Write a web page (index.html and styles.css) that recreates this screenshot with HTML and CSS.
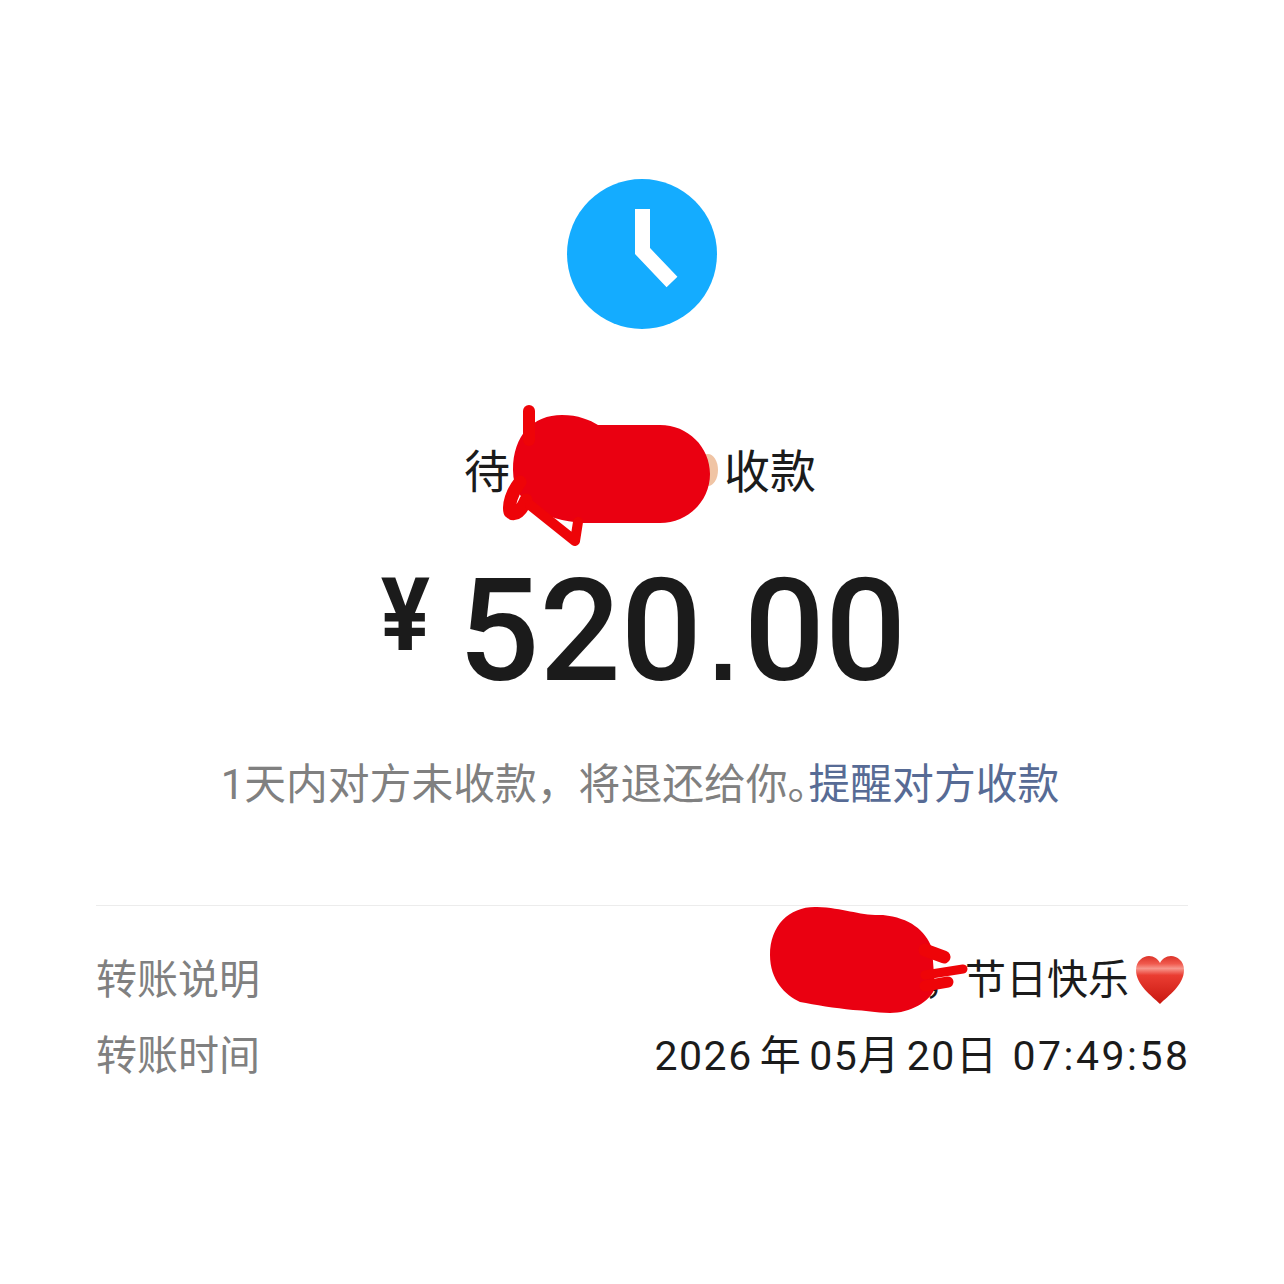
FILE: index.html
```html
<!DOCTYPE html>
<html lang="zh-CN">
<head>
  <meta charset="UTF-8" />
  <meta name="viewport" content="width=device-width, initial-scale=1.0"/>
  <title>转账详情</title>
  <link rel="stylesheet" href="styles.css">
</head>
<body>

  <div class="page">
    <svg class="status-icon" viewBox="0 0 150 150" width="150" height="150">
      <circle cx="75" cy="75" r="75" fill="#14acff"/>
      <path d="M75.5 30 V72 L105 103" fill="none" stroke="#fff" stroke-width="15"/>
    </svg>

    <div class="title">
      <span>待</span>
      <span class="title-name"></span>
      <span>收款</span>
    </div>

    <div class="amount">
      <span class="amount-sign">¥</span>
      <span class="amount-value">520<span class="amount-dot">.</span>00</span>
    </div>

    <div class="notice">1天内对方未收款，将退还给你<span class="notice-stop">。</span><span class="notice-link">提醒对方收款</span></div>

    <div class="details">
      <div class="row">
        <span class="row-label">转账说明</span>
        <span class="row-value">
          ，节日快乐
          <svg class="heart" viewBox="0 0 50 50" width="50" height="50">
            <defs>
              <linearGradient id="heart-fill" x1="0" y1="0" x2="0" y2="1">
                <stop offset="0" stop-color="#dc3228"/>
                <stop offset="0.16" stop-color="#f0594d"/>
                <stop offset="0.26" stop-color="#f7968c"/>
                <stop offset="0.4" stop-color="#ea3d32"/>
                <stop offset="1" stop-color="#c9170f"/>
              </linearGradient>
            </defs>
            <path d="M25 49 C17 41 1 30 1 15 C1 6 8 1 14 1 C19 1 23 4 25 8 C27 4 31 1 36 1 C42 1 49 6 49 15 C49 30 33 41 25 49 Z" fill="url(#heart-fill)"/>
          </svg>
        </span>
      </div>
      <div class="row">
        <span class="row-label">转账时间</span>
        <span class="row-value row-date">2026<span class="date-year">年</span>05<span class="date-unit">月</span>20<span class="date-unit">日</span><span class="date-time">07:49:58</span></span>
      </div>
    </div>

    <!-- red marker scribbles over the names -->
    <svg class="scribble" viewBox="0 0 1284 1284" width="1284" height="1284">
      <ellipse cx="708" cy="470" rx="10" ry="16" fill="#f0c4a4"/>
      <g fill="#ea0011">
        <path d="M513 470 C513 435 533 415 562 415 C578 415 590 420 598 425 L660 425 C688 425 710 447 710 474 C710 501 688 523 660 523 L583 523 C545 520 513 505 513 470 Z"/>
        <path d="M770 955 C770 925 790 906 817 907 C845 908 860 916 883 915 C910 918 925 930 932 948 L935 988 C930 1002 910 1013 890 1013 C875 1013 865 1010 853 1010 C835 1008 815 1005 800 1002 C785 995 770 980 770 955 Z"/>
      </g>
      <g fill="none" stroke="#ee0408" stroke-linecap="round" stroke-linejoin="round">
        <path d="M529 411 V440" stroke-width="12"/>
        <path d="M520 482 C512 492 508 505 510 512 C515 517 522 510 526 500" stroke-width="13"/>
        <path d="M530 505 L575 541 L578 522" stroke-width="10"/>
        <path d="M925 950 L944 957" stroke-width="13"/>
        <path d="M925 975 L963 969" stroke-width="9"/>
        <path d="M925 986 L948 982" stroke-width="11"/>
      </g>
    </svg>
  </div>

</body>
</html>
```

FILE: styles.css
```css
* {
  box-sizing: border-box;
}
body {
  margin: 0;
  background-color: #fff;
  color: #1b1b1b;
  font-family: "Roboto", "Noto Sans CJK SC", sans-serif;
}
.page {
  position: relative;
  width: 1284px;
  height: 1284px;
  padding: 179px 96px 0;
  display: flex;
  flex-direction: column;
  align-items: center;
  overflow: hidden;
}
.status-icon {
  display: block;
}
.title {
  display: flex;
  align-items: center;
  height: 60px;
  margin-top: 113px;
  margin-right: 4px;
  font-size: 46px;
  line-height: 60px;
}
.title-name {
  width: 214px;
}
.amount {
  display: flex;
  align-items: flex-start;
  height: 130px;
  margin-top: 61px;
  font-weight: 500;
  line-height: 130px;
}
.amount-sign {
  display: block;
  margin-right: 26px;
  font-size: 102px;
  font-weight: 700;
  line-height: 104px;
  transform: scaleX(0.9);
}
.amount-value {
  font-size: 143px;
}
.amount-dot {
  font-family: "Liberation Sans", sans-serif;
  font-size: 150px;
  font-weight: 400;
}
.notice {
  margin-top: 62px;
  margin-right: 4px;
  color: #808080;
  font-size: 41.8px;
  line-height: 60px;
}
.notice-stop {
  font-feature-settings: "halt";
}
.notice-link {
  color: #576b95;
}
.details {
  align-self: stretch;
  margin-top: 90px;
  padding-top: 44px;
  border-top: 1px solid #ececec;
}
.row {
  display: flex;
  justify-content: space-between;
  align-items: center;
  height: 60px;
  margin-bottom: 16px;
  font-size: 41px;
  line-height: 60px;
}
.row-label {
  color: #808080;
}
.row-value {
  display: flex;
  align-items: center;
}
.row-date {
  letter-spacing: 1.5px;
}
.date-year {
  margin: 0 7px;
}
.date-unit {
  margin-right: 6px;
}
.date-time {
  margin-left: 8px;
  margin-right: -2.5px;
  letter-spacing: 2.5px;
}
.heart {
  margin-left: 6px;
  margin-right: 3px;
}
.scribble {
  position: absolute;
  top: 0;
  left: 0;
}
```
